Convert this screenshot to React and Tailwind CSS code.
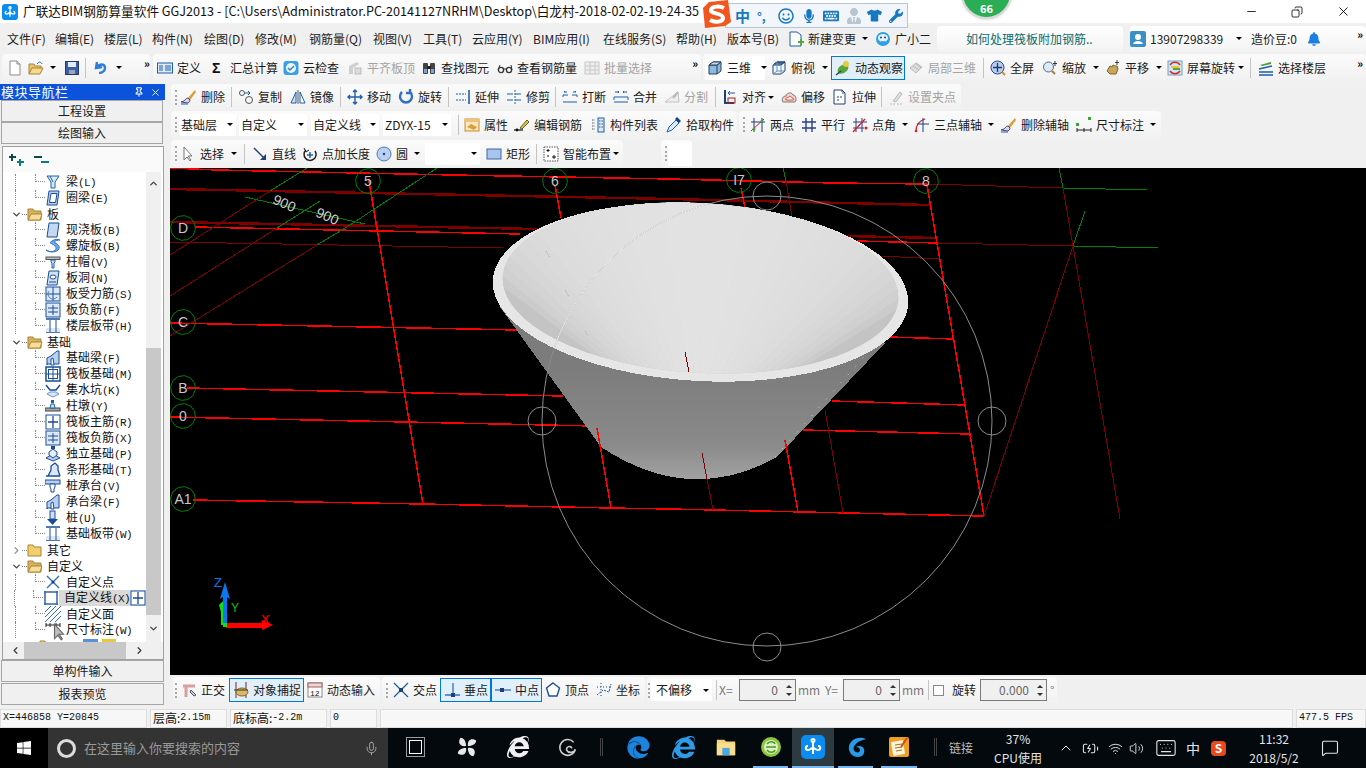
import clsx from "clsx";
import { FaBell, FaMicrophone, FaTshirt, FaWrench, FaKeyboard, FaRegSmile, FaWindows, FaEdge, FaInternetExplorer, FaUserTie } from "react-icons/fa";
import { ChevronUp, ChevronDown, ChevronLeft, ChevronRight, X, Minus, Copy, Wifi, Volume2, BatteryCharging, Keyboard, MessageSquare, Mic, Pin } from "lucide-react";

const B = "#1d5fa8";
const LB = "#cfe0f5";

const icons = {
  newf: <><path d="M3 1h7l3 3v11H3z" fill="#fff" stroke="#8a8a8a" /><path d="M10 1v3h3" fill="#ddd" stroke="#8a8a8a" /></>,
  open: <><path d="M1 14V4h5l1 2h6v2" fill="#e9c46a" stroke="#a8843a" /><path d="M1 14l3-6h11l-3 6z" fill="#f6d98a" stroke="#a8843a" /><path d="M9 4c2-3 4-2 5 0" fill="none" stroke={B} /></>,
  save: <><rect x="1.5" y="1.5" width="13" height="13" fill="#3d5fa8" stroke="#23386b" /><rect x="4" y="2" width="8" height="5" fill="#e4ecf8" /><rect x="5" y="10" width="6" height="4" fill="#9aa4b8" /></>,
  undo: <path d="M4 2L3 8l6-1M4 7c3-4 8-3 8 1 0 3-3 5-6 5" fill="none" stroke="#2f7fd6" strokeWidth="2.4" />,
  def: <><rect x="0.5" y="3" width="15" height="10" fill="#dfeaf7" stroke={B} /><path d="M2 6h4M2 8h4M2 10h4M8 6h6M8 8h6M8 10h6" stroke={B} /></>,
  sum: <text x="2" y="13" fontSize="14" fontWeight="700" fill="#111" fontFamily="Liberation Sans">Σ</text>,
  cloud: <><rect x="0.5" y="1" width="15" height="14" rx="3" fill="#3c9fe6" /><circle cx="8" cy="8" r="5" fill="#eaf5fd" /><path d="M5 8l2 2 4-4" fill="none" stroke="#2c80c4" strokeWidth="1.4" /></>,
  flush: <><path d="M2 14V6l8-4 2 2-6 4v6z" fill="#cfcfcf" /><rect x="8" y="8" width="6" height="6" fill="#dcdcdc" stroke="#bbb" /></>,
  find: <><rect x="2" y="3" width="5" height="11" rx="1" fill="#444" /><rect x="9" y="3" width="5" height="11" rx="1" fill="#444" /><rect x="3" y="9" width="3" height="4" fill="#7da6d8" /><rect x="10" y="9" width="3" height="4" fill="#7da6d8" /><rect x="6" y="6" width="4" height="3" fill="#222" /></>,
  glass: <><circle cx="4" cy="10" r="2.6" fill="none" stroke="#333" strokeWidth="1.3" /><circle cx="12" cy="10" r="2.6" fill="none" stroke="#333" strokeWidth="1.3" /><path d="M6 9h4M1 10l2-5M15 10l-1-5" stroke="#333" /></>,
  batch: <><rect x="1" y="2" width="14" height="12" fill="#eee" stroke="#c8c8c8" /><path d="M1 6h14M1 10h14M6 2v12M11 2v12" stroke="#c8c8c8" /></>,
  cube: <><path d="M2 5l4-3h8v9l-4 3H2z" fill="#8db9de" stroke="#27415f" /><path d="M2 5h8v9M10 5l4-3" fill="none" stroke="#27415f" /><path d="M2 5l4-3h8l-4 3z" fill="#c5dcef" stroke="#27415f" /></>,
  cubetop: <><path d="M2 5l4-3h8v9l-4 3H2z" fill="#eef5fb" stroke="#27415f" /><path d="M2 5l4-3h8l-4 3z" fill="#3f6fa6" stroke="#27415f" /><path d="M2 5h8v9M2 14l4-3h8M6 2v9" fill="none" stroke="#6f93b8" /></>,
  orbit: <><ellipse cx="8" cy="9" rx="6" ry="4" fill="#5aa53a" transform="rotate(-35 8 9)" /><circle cx="11" cy="4" r="3" fill="#e8c93a" /><path d="M1 15l5-4" stroke="#27415f" strokeWidth="1.5" /></>,
  local: <><path d="M2 8l6-5 6 4-6 6z" fill="#ddd" stroke="#bbb" /><path d="M5 6l6 4M8 4l5 4" stroke="#bbb" /></>,
  full: <><circle cx="7.5" cy="7.5" r="6.5" fill="#b9cdec" stroke="#274a83" /><path d="M7.5 3v9M3 7.5h9" stroke="#1d3a70" strokeWidth="1.3" /><path d="M12 12l3 3" stroke="#d98a2b" strokeWidth="2" /></>,
  zoomi: <><circle cx="6.5" cy="7" r="5" fill="#dceaf8" stroke="#5a6a7a" /><path d="M10 11l3 3" stroke="#a67c3a" strokeWidth="2" /><path d="M13 1v5M11 3.5h4" stroke="#333" /></>,
  pan: <><path d="M2 11l3-5 2 1 1-2 2 1 2 0 1 3-2 5H5z" fill="#c9a75c" stroke="#80642c" /><path d="M12 0v5M10 2.500h4" stroke="#444" /></>,
  rotscr: <><rect x="1" y="1" width="14" height="14" fill="#cfe6f7" stroke="#6fa6d0" /><path d="M3 5a6 6 0 0 1 10 0M13 11a6 6 0 0 1-10 0" fill="none" stroke="#d82c1e" strokeWidth="1.5" /><rect x="4" y="6" width="8" height="2" fill="#e8c83a" /><rect x="6" y="8" width="7" height="2" fill="#5aa53a" /></>,
  floors: <><path d="M2 5l11-3v2L4 6z" fill="#4a9a3a" /><path d="M1 9l13-3M1 12h14M1 15h14" stroke={B} strokeWidth="1.5" /></>,
  del: <><path d="M14 1L7 9l2 2 6-8z" fill="#d99a3a" /><path d="M7 9c-2 0-3 2-4 3l-3 1 7 1c2-1 2-3 2-3z" fill="#d9d4e8" stroke="#4a4a7a" /><path d="M0 15h7" stroke={B} /></>,
  copy: <><circle cx="4" cy="4" r="2.500" fill="none" stroke="#555" /><circle cx="11" cy="11" r="3.500" fill="none" stroke="#555" /><path d="M7 4h5l-2-2M12 4l-2 2" fill="none" stroke={B} /></>,
  mirror: <><path d="M1 14L6 3v11z" fill={LB} stroke={B} /><path d="M15 14L10 3v11z" fill="#fff" stroke={B} /><path d="M8 1v14" stroke="#555" /></>,
  move: <path d="M8 1v14M1 8h14M6 3l2-2 2 2M6 13l2 2 2-2M3 6L1 8l2 2M13 6l2 2-2 2" fill="none" stroke={B} strokeWidth="1.4" />,
  rot: <path d="M4 3a6 6 0 1 0 8 0M12 0v4h-4" fill="none" stroke="#2f6fc6" strokeWidth="2.400" />,
  extend: <><path d="M14 1v14" stroke={B} strokeWidth="1.6" /><path d="M1 5h10M1 11h10" stroke={B} strokeDasharray="2 1" /></>,
  trim: <><path d="M1 5h14M1 11h14" stroke={B} /><path d="M8 1v14" stroke="#fff" strokeWidth="2" /><path d="M9 1v14" stroke={B} strokeDasharray="2 1" /></>,
  brk: <><path d="M1 6h5M10 6h5M1 6v2M15 6v2M1 13h14" stroke={B} /><path d="M5 3H2l1-1M11 3h3l-1-1" fill="none" stroke={B} /></>,
  merge: <><path d="M1 8h14M1 13h14M1 8v3M15 8v3" stroke={B} /><path d="M2 3h4M14 3h-4M5 2l1 1-1 1M11 2l-1 1 1 1" fill="none" stroke={B} /></>,
  split: <><path d="M1 13h14L14 3 1 13z" fill="#eee" stroke="#c4c4c4" /><path d="M9 9l5-6" stroke="#b8b8b8" strokeWidth="2" /></>,
  align: <><path d="M3 1v14M3 14h9" stroke="#1f3f7a" strokeWidth="2" /><path d="M6 4h7M8 2L6 4l2 2" fill="none" stroke={B} /><rect x="6" y="9" width="7" height="5" fill="none" stroke="#a02020" /></>,
  offset: <><path d="M2 13c-2-3 0-6 3-6 1-4 6-4 7-1 3 0 4 5 2 7z" fill="#f3d0c8" stroke="#7a7a7a" /><path d="M5 11c-1-2 1-3 2-2 0-2 3-2 4 0 2 0 2 2 1 2z" fill="#fff" stroke="#d84a3a" /></>,
  stretch: <><path d="M2 1h8l3 3v11H2z" fill="#fff" stroke="#1f3f7a" /><path d="M10 1v3h3M5 8h5M5 11h3" fill="none" stroke="#1f3f7a" strokeDasharray="2 1" /></>,
  grip: <><path d="M2 15h5M9 15h5" stroke="#bbb" strokeDasharray="2 1" /><path d="M5 12L12 3l2 2-6 8z" fill="#ddd" stroke="#bbb" /></>,
  attr: <><rect x="1" y="2" width="14" height="12" fill="#fbe7c4" stroke="#c98a2a" /><rect x="1" y="2" width="14" height="3" fill="#ecc27a" /><path d="M3 10l4-3 6 3-3 3z" fill="#d9a03a" /></>,
  edit: <><path d="M0 13h9" stroke="#111" strokeWidth="1.2" /><path d="M6 11l7-8 2 2-7 7z" fill="#d9c04a" stroke="#6a5a2a" /><circle cx="3" cy="13" r="1.400" fill="#111" /></>,
  list: <><rect x="8" y="1" width="6" height="14" fill="#dce8f7" stroke={B} /><path d="M9 4h4M9 7h4M9 10h4M2 3h3M2 6h3M2 9h3M2 12h3" stroke="#456" strokeDasharray="1.500 1" /></>,
  pick: <><path d="M1 15l2-5 7-7 3 3-7 7z" fill="#dcecf9" stroke={B} /><path d="M9 2l2-2 4 4-2 2z" fill="#1d3f8a" /></>,
  two: <><path d="M1 14L14 2" stroke="#d82020" /><path d="M4 1v14M12 1v14M1 5h14" stroke="#1d3f7a" /><circle cx="12" cy="4" r="1.500" fill="#3aa53a" /><circle cx="4" cy="12" r="1.500" fill="#3aa53a" /></>,
  par: <path d="M5 1v14M11 1v14M1 5h14M1 11h14" stroke="#2a3f8a" strokeWidth="1.4" />,
  angle: <><path d="M4 1v14M10 1v14M1 5h14M1 11h11" stroke="#2a3f8a" /><path d="M1 15L13 2" stroke="#d82020" strokeWidth="1.300" /><circle cx="14" cy="11" r="1.500" fill="#d82020" /></>,
  three: <><path d="M2 14C2 8 5 4 11 2" fill="none" stroke="#d82020" strokeWidth="1.300" /><path d="M9 1v14M3 7h12" stroke="#1d3f7a" /><circle cx="2" cy="14" r="1.300" fill="#d82020" /></>,
  dim: <><path d="M1 13h14M1 11v4M8 11v4M15 11v4" stroke="#222" /><rect x="0" y="6" width="3" height="3" fill="#3aa53a" /><rect x="12" y="0" width="3" height="3" fill="#3aa53a" /></>,
  cursor: <path d="M4 1v13l3-3 3 4 1-1-3-4h4z" fill="#fff" stroke="#777" />,
  line: <><path d="M2 2l11 11" stroke="#1d3f7a" strokeWidth="1.500" /><path d="M8 14h6V8z" fill="#1d3f7a" /></>,
  ptlen: <><path d="M4 4a6 6 0 1 0 9 1" fill="none" stroke="#222" strokeWidth="1.500" /><path d="M8 6v6M5 9h6" stroke={B} strokeWidth="1.500" /><path d="M2 2l2 4 3-2" fill="none" stroke="#222" /></>,
  circ: <><circle cx="8" cy="8" r="7" fill="#b9d0f0" stroke="#4c79b8" /><circle cx="8" cy="8" r="1.200" fill="#1d3f7a" /></>,
  rect: <rect x="1" y="3" width="14" height="10" fill="#a9c5ee" stroke="#3a64a8" />,
  smart: <><rect x="1" y="1" width="14" height="14" fill="#fff" stroke="#555" strokeDasharray="1.500 1" /><path d="M5 3v3M3.500 4.500h3M11 9v4M9 11h4M4 10h2" stroke="#111" /></>,
  ortho: <><path d="M2 4h12M5 4v11" stroke="#d8a0a0" strokeWidth="3" /><path d="M10 8l5 5-2 1-4-4z" fill="#bcd" stroke="#556" /></>,
  snap: <><path d="M3 0v16M13 0v16" stroke="#7a2020" /><ellipse cx="9" cy="10" rx="6" ry="4" fill="#d8b860" stroke="#80642c" /><path d="M1 8h14" stroke="#333" /></>,
  dyn: <><rect x="1" y="1" width="14" height="14" fill="#fff" stroke="#888" /><rect x="1" y="1" width="14" height="4" fill="#e8d8d8" stroke="#a06060" /><text x="3" y="13.500" fontSize="8" fill="#111" fontFamily="Liberation Mono">12</text></>,
  cross: <><path d="M1 1l14 14M15 1L1 15" stroke={B} strokeWidth="1.300" /><rect x="6" y="6" width="4" height="4" fill="#1d3f7a" /></>,
  perp: <><path d="M1 13h15M9 1v14" stroke="#2f6fc6" strokeWidth="1.300" /><rect x="7" y="11" width="4" height="4" fill="#1d3f7a" /></>,
  midp: <><path d="M0 8h16" stroke="#2f6fc6" strokeWidth="1.300" /><rect x="5" y="6" width="4" height="4" fill="#1d3f7a" /></>,
  vertex: <path d="M8 1l6.500 5-2.500 8H4L1.500 6z" fill="#fff" stroke="#1d4f9a" strokeWidth="1.400" />,
  coord: <><path d="M1 13l6-5 6 2 2-8" fill="none" stroke={B} strokeDasharray="2 1" /><path d="M5 1v14M1 5h14" stroke="#1d3f7a" strokeDasharray="1 2" /></>,
  change: <><path d="M2 1h7l4 3v11H2z" fill="#fff" stroke={B} /><path d="M10 10h2V8h2v2h2v2h-2v2h-2v-2h-2z" fill="#4fae3a" /></>,
  robot: <><circle cx="8" cy="8" r="7" fill="#2f9fe8" /><ellipse cx="8" cy="7" rx="5" ry="4" fill="#e8f6ff" /><circle cx="6" cy="6.500" r="1" fill="#1d3f7a" /><circle cx="10" cy="6.500" r="1" fill="#1d3f7a" /><path d="M6 10c1 1 3 1 4 0" fill="none" stroke="#2f9fe8" /></>,
  user: <><rect width="16" height="16" rx="2" fill="#3a8fc8" /><circle cx="8" cy="6" r="3" fill="#fff" /><path d="M3 13c1-4 9-4 10 0z" fill="#fff" /></>,
  beam: <><path d="M2 2h12L10 8v6H6V8z" fill="#dcecf9" stroke={B} /><path d="M5 2l3 6" stroke={B} /></>,
  ring: <><path d="M4 1h10l-2 14H2z" fill="#b8d0ee" stroke="#1a4c98" /><path d="M6 3.500h6l-1.500 9h-6z" fill="#fff" stroke="#1a4c98" /></>,
  slab: <path d="M4 1h10l-2 14H2z" fill="#c4d8f2" stroke="#1a4c98" />,
  spiral: <path d="M1 12c5 4 13 0 9-4S3 6 7 3c3-2 6-2 8-1-3 0-6 1-5 3 3 1 6 4 3 7-3 3-9 2-12 0z" fill="#6faae8" stroke="#2f6fc6" />,
  cap: <><rect x="1" y="3" width="14" height="2.500" fill="#bbb" stroke="#555" /><path d="M6 6h4v2l-1 1v5H7V9L6 8z" fill="#cfe0f5" stroke={B} /></>,
  hole: <><path d="M4 1h10l-2 14H2z" fill="#cfe0f5" stroke="#1a4c98" /><ellipse cx="8" cy="7" rx="3" ry="2" fill="#fff" stroke="#1a4c98" /><path d="M4 12h7" stroke="#1a4c98" /></>,
  sb1: <><rect x="1" y="1" width="14" height="14" fill="#dce8f7" stroke="#1a4c98" /><path d="M8 1v14M1 8h14" stroke="#1a4c98" /><path d="M4 5a5 5 0 0 0 8 6" fill="none" stroke="#4a7fc8" /></>,
  sb2: <><rect x="1" y="1" width="14" height="14" fill="#dce8f7" stroke="#1a4c98" /><path d="M8 3v10M3 6h10M3 10h10" stroke="#1a4c98" /></>,
  band: <><path d="M1 1h14M1 14h14" stroke="#1a4c98" strokeWidth="1.500" /><rect x="1" y="10" width="14" height="4" fill="#dce8f7" /><path d="M5 2v12M11 2v12" stroke="#1a4c98" /></>,
  fbeam: <><path d="M2 15V8l4-2 6-5h2v13H2z" fill="#b8d0ee" stroke="#1a4c98" /><path d="M6 15V9l2-1 1 7z" fill="#fff" stroke="#1a4c98" /></>,
  raft: <><rect x="1" y="1" width="14" height="14" fill="#fff" stroke="#1a4c98" strokeWidth="1.500" /><rect x="3.500" y="3.500" width="9" height="9" fill="none" stroke="#1a4c98" /><path d="M8 1v14M1 8h14" stroke="#1a4c98" /></>,
  pit: <><path d="M1 3l4 5h6l4-5" fill="none" stroke="#1a4c98" strokeWidth="1.500" /><path d="M2 12l6 3 6-3-3-2H5z" fill="#dce8f7" stroke="#6a8fc8" /></>,
  pier: <><rect x="0" y="10" width="15" height="3" fill="#aaa" stroke="#444" /><path d="M5 10l1-4h3l1 4z" fill="#cfe0f5" stroke={B} /><rect x="6" y="2" width="3" height="3" fill={B} /></>,
  raftm: <><rect x="1" y="1" width="14" height="14" fill="#fff" stroke="#1a4c98" /><path d="M8 2v12M3 8h10" stroke="#1a4c98" strokeWidth="1.300" /></>,
  iso: <><path d="M1 12l7-4 7 4-7 3z" fill="#b8d0ee" stroke="#1a4c98" /><path d="M4 6l4-3 4 3v3l-4 3-4-3z" fill="#e4eefa" stroke="#1a4c98" /><rect x="6" y="0" width="4" height="3" fill="#1a4c98" /></>,
  strip: <><path d="M1 14h14M3 14l3-6V4l4-3 3 3v4l2 6" fill="#dce8f7" stroke="#1a4c98" strokeWidth="1.300" /></>,
  pcap: <><rect x="0" y="2" width="15" height="4" fill="#b8d0ee" stroke="#1a4c98" /><path d="M5 6h5v3l-1 2v3H6v-3L5 9z" fill="#fff" stroke="#1a4c98" /></>,
  pile: <><rect x="5" y="1" width="5" height="8" fill="#cfe0f5" stroke="#1a4c98" /><path d="M2 9h11l-5.500 6z" fill="#1a4c98" /></>,
  cpt: <><path d="M2 2l12 12M14 2L2 14" stroke="#2f6fc6" strokeWidth="1.400" /><circle cx="8" cy="8" r="1.500" fill="#1d3f7a" /></>,
  cline: <><rect x="2" y="2" width="12" height="12" fill="none" stroke="#1a4c98" strokeWidth="1.300" /><path d="M1 1h2v2H1zM13 1h2v2h-2zM1 13h2v2H1zM13 13h2v2h-2z" fill="#2f6fc6" /></>,
  cface: <path d="M0 6l6-6M0 11L11 0M0 16L16 0M5 16L16 5M10 16l6-6" stroke="#2f6fc6" />,
  cdim: <path d="M1 3h14M1 1v4M5 1v4M11 1v4M15 1v4" stroke="#222" />,
};

const Ico = ({ name, className }) => (
  <svg viewBox="0 0 16 16" className={clsx("w-4 h-4 shrink-0", className)}>
    {icons[name]}
  </svg>
);

const Logo = ({ className }) => (
  <svg viewBox="0 0 24 24" className={className}>
    <rect width="24" height="24" rx="5" fill="#0b8cf0" />
    <path d="M12 4c-2 0-2 3 0 3s2-3 0-3zM12 7v12M7 11c-3 0-3 4 0 4 2 0 3-2 5-2s3 2 5 2c3 0 3-4 0-4" fill="none" stroke="#fff" strokeWidth="2" />
  </svg>
);

const Caret = ({ className }) => (
  <span className={clsx("w-0 h-0 shrink-0 border-x-[3px] border-x-transparent border-t-[3px] border-t-black", className)} />
);

const Sep = ({ className }) => <i className={clsx("block w-px h-5 bg-[#c4c4c4] shrink-0", className || "-ml-[7px] mr-[6px]")} />;

const Grip = ({ className }) => <i className={clsx("block w-[2px] h-[15px] shrink-0 border-l-2 border-dotted border-[#a8a8a8]", className)} />;

const More = ({ className }) => <span className={clsx("text-[11px] leading-none font-bold text-black -mt-2", className)}>»</span>;

function Tool({ w, icon, label, gray, caret, active, className }) {
  return (
    <div
      className={clsx(
        "flex items-center shrink-0",
        w,
        active && "h-[24px] border border-[#0078d7] bg-[#e1effa] pl-[3px]",
        gray ? "text-[#a3a3a3]" : "text-[#1a1a1a]",
        className
      )}
    >
      {icon && <Ico name={icon} />}
      {label && <span className="ml-1 whitespace-nowrap">{label}</span>}
      {caret && <Caret className={caret} />}
    </div>
  );
}

const Combo = ({ w, label, className }) => (
  <div className={clsx("flex items-center justify-between h-[22px] bg-white pl-[2px] pr-[3px] shrink-0 text-[#1a1a1a] whitespace-nowrap", w, className)}>
    <span>{label}</span>
    <Caret />
  </div>
);

const Bar = ({ className, children }) => (
  <div className={clsx("flex items-center h-full bg-linear-to-b from-[#fbfbfb] to-[#f1f1f1] rounded-sm shrink-0", className)}>{children}</div>
);

const menus = [
  ["文件(F)", "w-[48px]"],
  ["编辑(E)", "w-[49px]"],
  ["楼层(L)", "w-[48px]"],
  ["构件(N)", "w-[52px]"],
  ["绘图(D)", "w-[51px]"],
  ["修改(M)", "w-[54px]"],
  ["钢筋量(Q)", "w-[64px]"],
  ["视图(V)", "w-[50px]"],
  ["工具(T)", "w-[49px]"],
  ["云应用(Y)", "w-[61px]"],
  ["BIM应用(I)", "w-[70px]"],
  ["在线服务(S)", "w-[73px]"],
  ["帮助(H)", "w-[51px]"],
  ["版本号(B)", "w-[61px]"],
];

const tree = [
  { t: "梁(L)", i: "beam" },
  { t: "圈梁(E)", i: "ring" },
  { t: "板", open: true },
  { t: "现浇板(B)", i: "slab" },
  { t: "螺旋板(B)", i: "spiral" },
  { t: "柱帽(V)", i: "cap" },
  { t: "板洞(N)", i: "hole" },
  { t: "板受力筋(S)", i: "sb1" },
  { t: "板负筋(F)", i: "sb2" },
  { t: "楼层板带(H)", i: "band" },
  { t: "基础", open: true },
  { t: "基础梁(F)", i: "fbeam" },
  { t: "筏板基础(M)", i: "raft" },
  { t: "集水坑(K)", i: "pit" },
  { t: "柱墩(Y)", i: "pier" },
  { t: "筏板主筋(R)", i: "raftm" },
  { t: "筏板负筋(X)", i: "sb2" },
  { t: "独立基础(P)", i: "iso" },
  { t: "条形基础(T)", i: "strip" },
  { t: "桩承台(V)", i: "pcap" },
  { t: "承台梁(F)", i: "fbeam" },
  { t: "桩(U)", i: "pile" },
  { t: "基础板带(W)", i: "band" },
  { t: "其它", closed: true },
  { t: "自定义", open: true },
  { t: "自定义点", i: "cpt" },
  { t: "自定义线(X)", i: "cline", sel: true },
  { t: "自定义面", i: "cface" },
  { t: "尺寸标注(W)", i: "cdim" },
];

const Folder = ({ open }) => (
  <svg viewBox="0 0 16 14" className="w-4 h-[14px] shrink-0">
    <path d="M1 13V2h5l1 2h7v9z" fill={open ? "#d8b25c" : "#f2cf6a"} stroke="#a8843a" />
    {open && <path d="M1 13l3-6h11l-2 6z" fill="#f8dd96" stroke="#a8843a" />}
  </svg>
);

function TreeRow({ row }) {
  const m = row.t.match(/^(.*?)(\(.\))?$/);
  const label = (
    <span className="whitespace-nowrap leading-4">
      {m[1]}
      {m[2] && <span className="font-['Liberation_Mono',monospace] text-[11px] tracking-[-0.6px]">{m[2]}</span>}
    </span>
  );
  if (!row.i) {
    return (
      <div className="flex items-center h-4">
        <span className="w-[8px]" />
        {row.open ? <ChevronDown size={11} strokeWidth={3} className="text-[#444]" /> : <ChevronRight size={11} strokeWidth={3} className="text-[#999]" />}
        <span className="w-[5px] border-b border-dotted border-[#888]" />
        <Folder open={row.open} />
        <span className="ml-[4px]">{label}</span>
      </div>
    );
  }
  return (
    <div className="flex items-center h-4">
      <span className="w-[12px]" />
      <span className="w-px h-full border-l border-dotted border-[#888]" />
      <span className="w-[19px]" />
      <span className="w-[10px] h-1/2 self-start border-l border-b border-dotted border-[#888]" />
      <Ico name={row.i} />
      <span className={clsx("flex items-center h-full pl-[5px] flex-1", row.sel && "bg-[#d9d9d9]")}>{label}</span>
      {row.sel && <Ico name="raftm" className="bg-[#cfe6fb]" />}
    </div>
  );
}

function Panel() {
  return (
    <div className="w-[165px] h-full flex flex-col bg-[#f0f0f0] shrink-0">
      <div className="h-4 flex items-center justify-between bg-[#0b53da] text-white text-[13px] leading-4 pl-px pr-[4px]">
        <span className="tracking-[0.5px]">模块导航栏</span>
        <span className="flex items-center gap-[6px]">
          <Pin size={10} strokeWidth={2.5} />
          <X size={11} />
        </span>
      </div>
      <div className="h-[22px] flex items-center justify-center border border-[#a6a6a6] ml-px mr-[2px] text-[#1a1a1a]">工程设置</div>
      <div className="h-[22px] flex items-center justify-center border border-[#a6a6a6] ml-px mr-[2px] text-[#1a1a1a]">绘图输入</div>
      <div className="mt-[2px] h-[514px] flex flex-col border border-[#a0a0a0] ml-[2px] mr-[1px] bg-white overflow-hidden">
        <div className="h-[25px] pl-[5px] flex items-center gap-[7px] bg-[#fafafa] shrink-0">
          <svg viewBox="0 0 18 14" className="w-[18px] h-[14px]"><path d="M4 1v7M1 4h7" stroke="#0a4a4a" strokeWidth="2" /><path d="M12 6v7M9 9h7" stroke="#0a7a7a" strokeWidth="2" /></svg>
          <svg viewBox="0 0 18 14" className="w-[18px] h-[14px]"><path d="M1 4h8" stroke="#0a4a4a" strokeWidth="2" /><path d="M8 9h8" stroke="#0a7a7a" strokeWidth="2" /></svg>
        </div>
        <div className="h-[470px] flex shrink-0 overflow-hidden">
          <div className="w-[143px] overflow-hidden">
            <div className="w-[143px] pt-[2px] text-[#111]">
              {tree.map((r) => (
                <TreeRow key={r.t} row={r} />
              ))}
              <div className="flex items-center h-4">
                <span className="w-[13px]" />
                <span className="w-[5px]" />
                <span className="w-[18px]" />
                <Folder />
                <span className="ml-[28px] w-[15px] h-[14px] bg-[#5a90d8]" />
                <span className="ml-[4px] w-[14px] h-[14px] bg-[#e8c83a]" />
              </div>
            </div>
          </div>
          <div className="w-[15px] flex flex-col bg-[#f0f0f0] shrink-0">
            <div className="h-[22px] flex items-center justify-center"><ChevronUp size={11} strokeWidth={3} className="text-[#444]" /></div>
            <div className="h-[154px]" />
            <div className="h-[267px] bg-[#c8c8c8]" />
            <div className="flex-1 flex items-center justify-center"><ChevronDown size={11} strokeWidth={3} className="text-[#444]" /></div>
          </div>
        </div>
        <div className="flex items-center flex-1 bg-[#f0f0f0] pl-[7px]">
          <ChevronLeft size={11} strokeWidth={3} className="text-[#444] shrink-0" />
          <span className="ml-[3px] w-[102px] h-full bg-[#c8c8c8]" />
          <ChevronRight size={11} strokeWidth={3} className="text-[#444] ml-[8px] shrink-0" />
        </div>
      </div>
      <div className="h-[22px] flex items-center justify-center border border-[#a6a6a6] ml-px mr-[1px] text-[#1a1a1a]">单构件输入</div>
      <div className="h-[22px] mt-px flex items-center justify-center border border-[#a6a6a6] ml-px mr-[1px] text-[#1a1a1a]">报表预览</div>
    </div>
  );
}

const CW = 12;
const axisMarks = [
  ["D", 183, 228],
  ["C", 183, 322],
  ["B", 183, 388],
  ["0", 183, 416],
  ["A1", 183, 499],
  ["5", 368, 181],
  ["6", 555, 181],
  ["I7", 739, 180],
  ["8", 926, 181],
];

const octo = (cx, cy, r) =>
  Array.from({ length: CW }, (_, i) => {
    const a = (i / CW) * Math.PI * 2 + 0.13;
    return `${(cx + r * Math.cos(a)).toFixed(1)},${(cy + r * Math.sin(a)).toFixed(1)}`;
  }).join(" ");

const backLines = [
  ["#f00", "170,168 217,170 310,172 453,175 670,179 833,183 927,184"],
  ["#800000", "927,184 1063,188"],
  ["#008000", "1063,188 1147,190"],
  ["#008000", "1059,168 1063,188"],
  ["#800000", "170,189 670,199 930,205", 2.4],
  ["#800000", "170,222 537,229", 2.4],
  ["#800000", "843,236 937,238", 2.4],
  ["#f00", "195,227 520,234"],
  ["#f00", "857,241 937,243"],
  ["#800000", "937,243 1073,246"],
  ["#008000", "1073,246 1158,248"],
  ["#800000", "170,242 503,248"],
  ["#800000", "880,256 940,259"],
  ["#f00", "170,323 517,330"],
  ["#f00", "890,337 953,339"],
  ["#f00", "187,388 563,396"],
  ["#f00", "832,401 965,405"],
  ["#f00", "170,417 593,426"],
  ["#f00", "803,430 970,434"],
  ["#f00", "193,500 423,504 610,508 670,509 983,516"],
  ["#f00", "369,181 423,504"],
  ["#f00", "555,185 561,218"],
  ["#f00", "741,188 745,208"],
  ["#008000", "783,168 786,181"],
  ["#800000", "786,181 792,217"],
  ["#800000", "825,410 843,513"],
  ["#f00", "927,185 984,516"],
  ["#800000", "984,516 1073,246"],
  ["#800000", "1063,188 1120,519"],
  ["#008000", "1073,246 1085,211"],
  ["#008000", "307,168 270,191"],
  ["#800000", "270,191 170,255"],
  ["#008000", "437,168 350,225 317,245"],
  ["#800000", "317,245 170,336"],
  ["#008000", "320,201 277,228"],
  ["#800000", "277,228 170,296"],
  ["#008000", "245,197 365,224"],
];

const frontLines = [
  ["#800000", "685,352 689,372"],
  ["#800000", "702,453 713,510"],
  ["#f00", "785,440 798,512"],
  ["#f00", "597,428 611,508"],
];

// slats of the inside wall: they fan out from a point below the rim
function wedges() {
  const out = [];
  const n = 40;
  const cx = 700,
    cy = 288;
  const rot = (3.3 * Math.PI) / 180;
  const pt = (a) => {
    const x = 212 * Math.cos(a);
    const y = 92 * Math.sin(a);
    return `${(cx + x * Math.cos(rot) - y * Math.sin(rot)).toFixed(1)},${(cy + x * Math.sin(rot) + y * Math.cos(rot)).toFixed(1)}`;
  };
  const start = (150 * Math.PI) / 180;
  const span = (240 * Math.PI) / 180;
  for (let i = 0; i < n; i++) {
    const a0 = start + (i / n) * span;
    const a1 = start + ((i + 1.05) / n) * span;
    const mid = (a0 + a1) / 2;
    const s = mid > Math.PI && mid < Math.PI * 2 ? Math.sin(mid - Math.PI) : 0;
    const g = Math.round(196 + 30 * Math.sqrt(s));
    out.push(<polygon key={i} points={`697,433 ${pt(a0)} ${pt(a1)}`} fill={`rgb(${g},${g},${g})`} />);
  }
  return out;
}

function Canvas() {
  return (
    <div className="w-[1196px] h-[507px] bg-black mt-px shrink-0 overflow-hidden">
      <svg viewBox="170 168 1196 507" className="w-full h-full block">
        <defs>
          <linearGradient id="cone" x1="0" y1="0" x2="0" y2="1">
            <stop offset="0.35" stopColor="#7c7c7c" />
            <stop offset="0.8" stopColor="#8a8a8a" />
            <stop offset="1" stopColor="#a2a2a2" />
          </linearGradient>
          <clipPath id="inner">
            <ellipse cx="700.5" cy="288" rx="198" ry="85" transform="rotate(3.3 700.5 288)" />
          </clipPath>
          <clipPath id="bowl">
            <ellipse cx="700.5" cy="292" rx="208" ry="89" transform="rotate(3.3 700.5 292)" />
          </clipPath>
        </defs>
        <g fill="none" shapeRendering="crispEdges">
          {backLines.map(([c, p, sw], i) => (
            <polyline key={i} points={p} stroke={c} strokeWidth={sw || (c === "#f00" ? 1.5 : 1)} />
          ))}
        </g>
        {axisMarks.map(([t, x, y]) => (
          <g key={t}>
            <polygon points={octo(x, y, 12.5)} fill="none" stroke="#008000" />
            <text x={x} y={y + 5} textAnchor="middle" fontSize="14" fill="#c8c8c8" fontFamily="Liberation Sans">{t}</text>
          </g>
        ))}
        <text x="284" y="208" fontSize="14" fill="#d0d0d0" fontFamily="Liberation Sans" textAnchor="middle" transform="rotate(24 284 204)">900</text>
        <text x="327" y="221" fontSize="14" fill="#d0d0d0" fontFamily="Liberation Sans" textAnchor="middle" transform="rotate(24 327 217)">900</text>

        <path d="M500,307 L601,447 Q690,506 777,457 L885,343 Z" fill="url(#cone)" shapeRendering="crispEdges" />
        <path d="M775,457 L870,350" stroke="#d0d0d0" strokeDasharray="1 10" fill="none" />
        <ellipse cx="700.5" cy="292" rx="208" ry="89" fill="#e6e6e6" transform="rotate(3.3 700.5 292)" shapeRendering="crispEdges" />
        <g clipPath="url(#inner)">
          <rect x="490" y="200" width="420" height="180" fill="#c6c6c6" />
          {wedges()}
        </g>
        <g stroke="#a8a8a8" strokeDasharray="1 1" fill="none">
          <path d="M546,251 L550,258" />
          <path d="M565,290 L569,297" />
          <path d="M585,331 L588,336" />
        </g>
        <g fill="none" shapeRendering="crispEdges">
          {frontLines.map(([c, p], i) => (
            <polyline key={i} points={p} stroke={c} strokeWidth={c === "#f00" ? 1.5 : 1} />
          ))}
        </g>

        <g fill="none" stroke="#8c8c8c">
          <circle cx="767" cy="421" r="225" />
          <circle cx="767" cy="196" r="14" />
          <circle cx="767" cy="647" r="14" />
          <circle cx="542" cy="421" r="14" />
          <circle cx="992" cy="421" r="14" />
        </g>
        <g clipPath="url(#bowl)">
          <circle cx="767" cy="421" r="225" fill="none" stroke="#f2f2f2" />
        </g>

        <path d="M221,625 V612 L219,605 L222,602 L225,600 V625 Z" fill="#12e012" />
        <path d="M223,625 V597 L220,599 L225,582 L230,599 L227,597 V625 Z" fill="#0a78f0" />
        <path d="M226,623 H262 V620 L273,625 L262,630 V628 H226 Z" fill="#f00" />
        <path d="M223,623h4v4h-4z" fill="#12e012" />
        <text x="214" y="587" fontSize="13" fill="#0a78f0" fontFamily="Liberation Sans">Z</text>
        <text x="231" y="612" fontSize="12" fill="#12c012" fontFamily="Liberation Sans">Y</text>
        <text x="261" y="624" fontSize="13" fill="#f00" fontFamily="Liberation Sans">X</text>
      </svg>
    </div>
  );
}

const Spin = ({ w, v }) => (
  <div className={clsx("h-[22px] border border-[#7a7a7a] bg-[#f0f0f0] flex items-center justify-end text-[#666] shrink-0", w)}>
    <span className="pr-[5px]">{v}</span>
    <span className="w-[12px] flex flex-col items-center gap-[5px]">
      <span className="w-0 h-0 border-x-[3px] border-x-transparent border-b-[3px] border-b-[#333]" />
      <span className="w-0 h-0 border-x-[3px] border-x-transparent border-t-[3px] border-t-[#333]" />
    </span>
  </div>
);

const Cell = ({ w, children, className, lit, inset }) => (
  <div className={clsx("h-full flex items-center justify-center shrink-0", w, lit && "bg-[#2d3a40]", inset && "px-[4px]", className)}>
    <div className={clsx("h-full w-full flex items-center justify-center border-b-2", lit || inset ? "border-[#78b8f0]" : "border-transparent")}>{children}</div>
  </div>
);

const StatusCell = ({ w, children }) => (
  <div className={clsx("h-[19px] mr-[3px] flex items-center px-[2px] border border-[#dddddd] bg-[#f7f7f7] shrink-0 text-[#111] whitespace-nowrap", w)}>{children}</div>
);

const mono = "font-['Liberation_Mono',monospace] text-[10px]";

export default function App() {
  return (
    <div className="relative w-[1366px] h-[768px] overflow-hidden bg-[#f0f0f0] flex flex-col text-xs font-['Noto_Sans_CJK_SC','Noto_Sans',sans-serif]">
      {/* title */}
      <div className="h-[23px] bg-white flex items-center shrink-0 pl-[2px]">
        <Logo className="w-4 h-4 shrink-0" />
        <span className="ml-[5px] text-[#111] whitespace-nowrap text-[12.65px]">广联达BIM钢筋算量软件 GGJ2013 - [C:\Users\Administrator.PC-20141127NRHM\Desktop\白龙村-2018-02-02-19-24-35</span>
        <div className="ml-auto flex items-center text-black">
          <span className="w-[45px] flex justify-center"><Minus size={13} strokeWidth={1.5} /></span>
          <span className="w-[46px] flex justify-center"><Copy size={12} strokeWidth={1.6} className="-scale-x-100" /></span>
          <span className="w-[46px] flex justify-center"><X size={15} strokeWidth={1.4} /></span>
        </div>
      </div>

      {/* menu */}
      <div className="h-[31px] flex items-center shrink-0 pl-[7px] text-[#222]">
        {menus.map(([t, w]) => (
          <span key={t} className={clsx("shrink-0 whitespace-nowrap", w)}>{t}</span>
        ))}
        <Tool w="w-[87px]" icon="change" label="新建变更" caret="ml-[6px]" />
        <Tool w="w-[62px]" icon="robot" label="广小二" />
        <div className="w-[186px] h-[26px] flex items-center pl-[29px] text-[#0a6b6b] bg-linear-to-b from-white to-[#f3f3f3] rounded-sm shrink-0">如何处理筏板附加钢筋..</div>
        <div className="ml-[7px] flex flex-1 items-center h-[26px] bg-linear-to-b from-white to-[#f3f3f3] rounded-sm">
          <Ico name="user" />
          <span className="ml-1 w-[86px] whitespace-nowrap">13907298339</span>
          <Caret />
          <span className="ml-[9px] w-[56px] whitespace-nowrap">造价豆:0</span>
          <FaBell size={14} className="text-[#1a7fe0]" />
          <More className="ml-auto mr-[3px]" />
        </div>
      </div>

      {/* standard bar */}
      <div className="h-[27px] flex items-center shrink-0 pl-[2px]">
        <Bar className="w-[148px] pl-[5px]">
          <Tool w="w-[21px]" icon="newf" />
          <Tool w="w-[36px]" icon="open" caret="ml-[6px]" />
          <Tool w="w-[29px]" icon="save" />
          <Sep className="-ml-[8px] mr-[7px]" />
          <Tool w="w-[51px]" icon="undo" caret="ml-[7px]" />
          <More className="ml-auto mr-[4px]" />
        </Bar>
        <Bar className="w-[548px] pl-[4px] ml-[3px]">
          <Tool w="w-[53px]" icon="def" label="定义" />
          <Tool w="w-[73px]" icon="sum" label="汇总计算" />
          <Tool w="w-[64px]" icon="cloud" label="云检查" />
          <Tool w="w-[74px]" icon="flush" label="平齐板顶" gray />
          <Tool w="w-[76px]" icon="find" label="查找图元" />
          <Tool w="w-[87px]" icon="glass" label="查看钢筋量" />
          <Tool icon="batch" label="批量选择" gray />
          <More className="ml-auto mr-[3px]" />
        </Bar>
        <Bar className="flex-1 ml-[2px] pl-[2px]">
          <Tool w="w-[60px]" icon="cube" label="三维" caret="ml-[10px]" className="h-[24px] bg-white pl-[2px] mr-[6px]" />
          <Tool w="w-[60px]" icon="cubetop" label="俯视" caret="ml-[7px]" />
          <Tool w="w-[74px]" icon="orbit" label="动态观察" active className="mr-[3px]" />
          <Tool w="w-[82px]" icon="local" label="局部三维" gray />
          <Sep />
          <Tool w="w-[52px]" icon="full" label="全屏" />
          <Tool w="w-[63px]" icon="zoomi" label="缩放" caret="ml-[7px]" />
          <Tool w="w-[62px]" icon="pan" label="平移" caret="ml-[7px]" />
          <Tool w="w-[91px]" icon="rotscr" label="屏幕旋转" caret="ml-[3px]" />
          <Sep className="-ml-[8px] mr-[7px]" />
          <Tool icon="floors" label="选择楼层" />
          <More className="ml-auto mr-[3px]" />
        </Bar>
      </div>

      <div className="h-[624px] mt-[3px] flex shrink-0">
        <Panel />

        <div className="ml-[5px] w-[1196px] flex flex-col">
          <div className="h-[26px] flex shrink-0">
            <Bar className="ml-px w-[790px] pl-[4px]">
              <Grip className="mr-[4px]" />
              <Tool w="w-[57px]" icon="del" label="删除" />
              <Sep />
              <Tool w="w-[52px]" icon="copy" label="复制" />
              <Tool w="w-[57px]" icon="mirror" label="镜像" />
              <Sep />
              <Tool w="w-[51px]" icon="move" label="移动" />
              <Tool w="w-[57px]" icon="rot" label="旋转" />
              <Sep />
              <Tool w="w-[51px]" icon="extend" label="延伸" />
              <Tool w="w-[56px]" icon="trim" label="修剪" />
              <Sep />
              <Tool w="w-[51px]" icon="brk" label="打断" />
              <Tool w="w-[51px]" icon="merge" label="合并" />
              <Tool w="w-[58px]" icon="split" label="分割" gray />
              <Sep />
              <Tool w="w-[59px]" icon="align" label="对齐" caret="ml-[2px]" />
              <Tool w="w-[51px]" icon="offset" label="偏移" />
              <Tool w="w-[56px]" icon="stretch" label="拉伸" />
              <Sep />
              <Tool icon="grip" label="设置夹点" gray />
            </Bar>
          </div>

          <div className="h-[27px] mt-px flex shrink-0">
            <Bar className="ml-px w-[566px] pl-[4px]">
              <Grip className="mr-[2px]" />
              <Combo w="w-[57px]" label="基础层" />
              <Combo w="w-[68px]" label="自定义" className="ml-[3px]" />
              <Combo w="w-[68px]" label="自定义线" className="ml-[4px]" />
              <Combo w="w-[68px]" label="ZDYX-15" className="ml-[4px]" />
              <Sep className="ml-[7px] mr-[5px]" />
              <Tool w="w-[50px]" icon="attr" label="属性" />
              <Tool w="w-[76px]" icon="edit" label="编辑钢筋" />
              <Tool w="w-[76px]" icon="list" label="构件列表" />
              <Tool icon="pick" label="拾取构件" />
            </Bar>
            <Bar className="ml-[2px] w-[422px] pl-[4px]">
              <Grip className="mr-[5px]" />
              <Tool w="w-[51px]" icon="two" label="两点" />
              <Tool w="w-[51px]" icon="par" label="平行" />
              <Tool w="w-[62px]" icon="angle" label="点角" caret="ml-[6px]" />
              <Tool w="w-[87px]" icon="three" label="三点辅轴" caret="ml-[6px]" />
              <Tool w="w-[75px]" icon="del" label="删除辅轴" />
              <Tool icon="dim" label="尺寸标注" caret="ml-[6px]" />
            </Bar>
          </div>

          <div className="h-[27px] mt-[2px] flex shrink-0">
            <Bar className="ml-px w-[452px] pl-[4px]">
              <Grip className="mr-[3px]" />
              <Tool w="w-[72px]" icon="cursor" label="选择" caret="ml-[7px]" />
              <Sep className="-ml-[8px] mr-[7px]" />
              <Tool w="w-[50px]" icon="line" label="直线" />
              <Tool w="w-[74px]" icon="ptlen" label="点加长度" />
              <Tool w="w-[49px]" icon="circ" label="圆" caret="ml-[6px]" />
              <Combo w="w-[55px]" label="" />
              <Tool w="w-[57px]" icon="rect" label="矩形" className="ml-[6px]" />
              <Sep />
              <Tool icon="smart" label="智能布置" caret="ml-[2px]" />
            </Bar>
            <Bar className="ml-[38px] w-[31px] pl-[4px]">
              <Grip className="mr-px" />
              <span className="flex-1 h-[24px] bg-white" />
            </Bar>
          </div>

          <Canvas />

          <div className="h-[26px] mt-[2px] flex shrink-0">
            <Bar className="ml-[3px] w-[207px] pl-[2px]">
              <Grip className="mr-[4px]" />
              <Tool w="w-[48px]" icon="ortho" label="正交" />
              <Tool w="w-[75px]" icon="snap" label="对象捕捉" active className="mr-[3px]" />
              <Tool icon="dyn" label="动态输入" />
            </Bar>
            <Bar className="ml-[2px] w-[263px] pl-[4px]">
              <Grip className="mr-[5px]" />
              <Tool w="w-[47px]" icon="cross" label="交点" />
              <Tool w="w-[51px]" icon="perp" label="垂点" active />
              <Tool w="w-[51px]" icon="midp" label="中点" active className="mr-[3px]" />
              <Tool w="w-[51px]" icon="vertex" label="顶点" />
              <Tool icon="coord" label="坐标" />
            </Bar>
            <Bar className="ml-[2px] w-[410px] pl-px text-[#777]">
              <Grip className="mr-px" />
              <div className="flex items-center justify-between h-[22px] w-[61px] bg-white pl-[5px] pr-[3px] text-[#1a1a1a] shrink-0">
                <span>不偏移</span>
                <Caret />
              </div>
              <Sep className="ml-[4px] mr-[2px]" />
              <span className="w-[20px]">X=</span>
              <Spin w="w-[57px]" v="0" />
              <span className="ml-[2px] w-[27px]">mm</span>
              <span className="w-[18px]">Y=</span>
              <Spin w="w-[57px]" v="0" />
              <span className="ml-[2px] w-[26px]">mm</span>
              <Sep className="mr-[4px]" />
              <span className="w-[11px] h-[11px] border border-[#888] bg-white shrink-0" />
              <span className="ml-[8px] w-[28px] text-[#1a1a1a]">旋转</span>
              <Spin w="w-[67px]" v="0.000" />
              <span className="ml-[3px]">°</span>
            </Bar>
          </div>
        </div>
      </div>

      {/* status */}
      <div className="h-[20px] flex items-center shrink-0">
        <StatusCell w="w-[147px]"><span className={mono}>X=446858 Y=20845</span></StatusCell>
        <StatusCell w="w-[77px]">层高:<span className={mono}>2.15m</span></StatusCell>
        <StatusCell w="w-[97px]">底标高:<span className={mono}>-2.2m</span></StatusCell>
        <StatusCell w="w-[47px]"><span className={mono}>0</span></StatusCell>
        <StatusCell w="w-[913px]" />
        <StatusCell w="w-[70px]"><span className={mono}>477.5 FPS</span></StatusCell>
      </div>

      {/* taskbar */}
      <div className="h-[40px] flex items-center bg-[#03090d] text-[#e4e4e4] shrink-0">
        <div className="w-[48px] h-full bg-black flex items-center justify-center"><FaWindows size={16} className="text-white" /></div>
        <div className="w-[340px] h-full bg-[#333333] flex items-center pl-[9px] shrink-0">
          <span className="w-[19px] h-[19px] rounded-full border-[3px] border-[#dcdcdc]" />
          <span className="ml-[8px] text-[13px] text-[#999] whitespace-nowrap">在这里输入你要搜索的内容</span>
          <Mic size={15} strokeWidth={1.5} className="ml-auto mr-[9px] text-[#aaa]" />
        </div>
        <Cell w="w-[54px]"><span className="w-[13px] h-[14px] border border-white outline outline-offset-[2px] outline-white/60" /></Cell>
        <Cell w="w-[49px]">
          <svg viewBox="0 0 24 24" className="w-[22px] h-[22px]"><path d="M11 11C3 12 2 6 5 2c3 0 6 3 6 9zM13 11C12 3 18 2 22 5c0 3-3 6-9 6zM13 13c8-1 9 5 6 9-3 0-6-3-6-9zM11 13c1 8-5 9-9 6 0-3 3-6 9-6z" fill="#e8e8e8" /></svg>
        </Cell>
        <Cell w="w-[53px]"><FaInternetExplorer size={22} className="text-[#f0f0f0]" /></Cell>
        <Cell w="w-[46px]">
          <svg viewBox="0 0 24 24" className="w-[21px] h-[21px]"><path d="M19 6a9 9 0 1 0 2 8c-1 4-8 5-10 1-1-4 5-6 6-2" fill="none" stroke="#ccc" strokeWidth="1.800" /></svg>
        </Cell>
        <Cell w="w-[22px]"><span className="w-[3px] h-[18px] border-x border-[#444]" /></Cell>
        <Cell w="w-[52px]"><FaEdge size={23} className="text-[#1c84dc]" /></Cell>
        <Cell w="w-[39px]"><FaInternetExplorer size={23} className="text-[#2f9be8]" /></Cell>
        <Cell w="w-[46px]">
          <svg viewBox="0 0 24 24" className="w-[22px] h-[22px]"><path d="M2 4h8l2 2h10v15H2z" fill="#f3d27a" /><rect x="2" y="8" width="20" height="13" fill="#f8de95" /><rect x="8" y="13" width="8" height="8" fill="#4aa8e0" /></svg>
        </Cell>
        <Cell w="w-[43px]" inset>
          <svg viewBox="0 0 24 24" className="w-[24px] h-[24px]"><circle cx="12" cy="12" r="10" fill="#8cc63f" /><circle cx="12" cy="12" r="7" fill="#dff0c0" /><path d="M7 12h10M8 9c2-3 7-3 8 0M8 15c2 3 7 3 8 0" fill="none" stroke="#4a9a2a" strokeWidth="1.500" /></svg>
        </Cell>
        <Cell w="w-[42px]" lit><Logo className="w-[24px] h-[24px]" /></Cell>
        <Cell w="w-[43px]" inset>
          <svg viewBox="0 0 24 24" className="w-[24px] h-[24px]"><path d="M22 4c-6-3-15-1-17 7-1 6 3 11 9 11 5 0 7-4 6-8-1-3-5-4-8-2 2 0 4 1 4 3 0 2-2 3-4 2-3-1-3-5-1-7 3-4 8-5 11-6z" fill="#2a9ae8" /></svg>
        </Cell>
        <Cell w="w-[44px]" inset>
          <svg viewBox="0 0 24 24" className="w-[24px] h-[24px]"><rect x="2" y="2" width="20" height="20" rx="2" fill="#f0a020" /><rect x="5" y="6" width="12" height="14" fill="#fdf3d8" transform="rotate(-10 11 13)" /><path d="M8 10l7-1M8 13l7-1M9 16l6-1" stroke="#a07030" /><path d="M14 12l6-9" stroke="#c8501e" strokeWidth="2" /></svg>
        </Cell>
        <Cell w="w-[28px]"><span className="w-[3px] h-[18px] border-x border-[#444]" /></Cell>
        <div className="w-[24px] text-[#bbb] whitespace-nowrap">链接</div>
        <div className="ml-[11px] w-[68px] flex flex-col items-center leading-[19px] text-[#e4e4e4]">
          <span>37%</span>
          <span>CPU使用</span>
        </div>
        <ChevronUp size={16} strokeWidth={1.500} className="ml-[6px]" />
        <BatteryCharging size={17} strokeWidth={1.500} className="ml-[8px]" />
        <Wifi size={15} strokeWidth={1.500} className="ml-[9px]" />
        <Volume2 size={15} strokeWidth={1.500} className="ml-[6px]" />
        <Keyboard size={22} strokeWidth={1.200} className="ml-[11px]" />
        <span className="ml-[9px] text-[14px]">中</span>
        <span className="ml-[11px] w-[15px] h-[15px] bg-[#e84a1c] rounded-sm flex items-center justify-center text-white text-[12px] font-bold leading-none">S</span>
        <div className="ml-[13px] w-[70px] flex flex-col items-center leading-[19px]">
          <span>11:32</span>
          <span>2018/5/2</span>
        </div>
        <MessageSquare size={18} strokeWidth={1.500} className="ml-[12px]" />
      </div>

      {/* floating: ime bar, score badge, mouse cursor */}
      <div className="absolute left-[725px] top-[3px] w-[183px] h-[25px] border border-[#b4c6d8] bg-[#f2f6fb] flex items-center pl-[9px] text-[#1678c2]">
        <span className="text-[15px] font-bold w-[22px] leading-none">中</span>
        <span className="w-[21px] font-bold leading-none">°,</span>
        <FaRegSmile size={16} className="mr-[8px]" />
        <FaMicrophone size={14} className="mr-[7px]" />
        <FaKeyboard size={16} className="mr-[7px]" />
        <FaUserTie size={16} className="mr-[5px] text-[#b8c4d0]" />
        <FaTshirt size={15} className="mr-[7px]" />
        <FaWrench size={14} />
      </div>
      <svg viewBox="0 0 28 28" className="absolute left-[703px] top-0 w-[28px] h-[28px]">
        <path d="M6 2L25 0 28 22 22 26 2 28 0 8z" fill="#f0561d" />
        <path d="M21 8C15 5 7 7 8 11c1 3 12 2 12 7 0 4-8 5-13 2" fill="none" stroke="#fff" strokeWidth="4" />
      </svg>
      <div className="absolute left-[961px] -top-[32px] w-[51px] h-[51px] rounded-full bg-[#2aad55] border-2 border-[#d8d8d8] shadow flex items-end justify-center pb-[3px] text-white text-[11px] leading-none font-bold">66</div>
      <svg viewBox="0 0 16 16" className="absolute left-[50px] top-[622px] w-[18px] h-[20px]">
        <path d="M4 1v13l3-3 3 4 1-1-3-4h4z" fill="#bdbdbd" stroke="#666" />
      </svg>
    </div>
  );
}
